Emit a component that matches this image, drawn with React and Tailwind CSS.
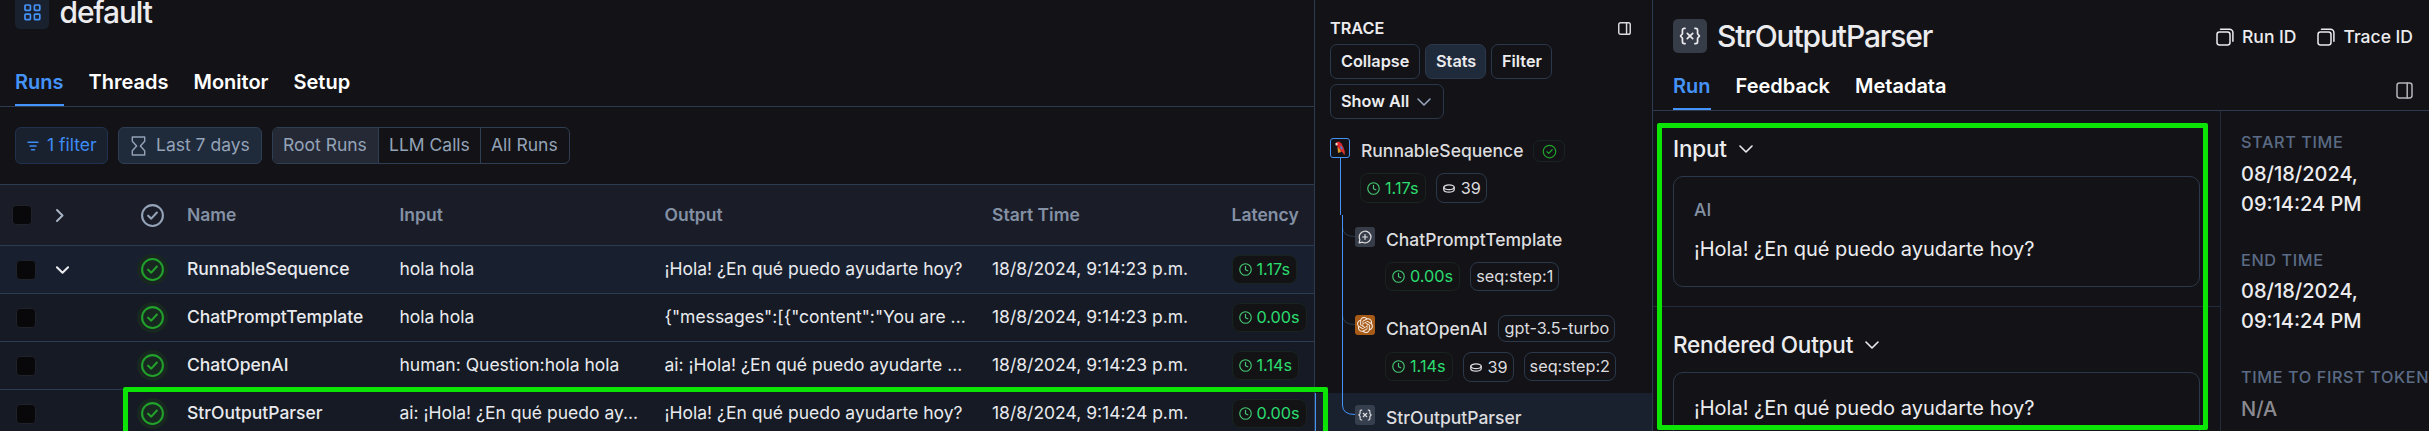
const Svg = ({ s, w, h, sw = 2, vb = '0 0 24 24', className = '', children }) => (
  <svg
    width={w || s}
    height={h || s}
    viewBox={vb}
    fill="none"
    stroke="currentColor"
    strokeWidth={sw}
    strokeLinecap="round"
    strokeLinejoin="round"
    className={'shrink-0 ' + className}
  >
    {children}
  </svg>
)

const GridIcon = () => (
  <Svg s={17} sw={1.7} vb="0 0 17 17">
    <rect x="1" y="1" width="5.4" height="5.4" rx="0.8" />
    <rect x="10.4" y="1" width="5.4" height="5.4" rx="0.8" />
    <rect x="1" y="10.2" width="5.4" height="5.4" rx="0.8" />
    <rect x="10.4" y="10.2" width="5.4" height="5.4" rx="0.8" />
  </Svg>
)
const FilterIcon = () => (
  <Svg w={12} h={10} vb="0 0 12 10" sw={1.5}>
    <path d="M1 1.3h10M3 5h6M4.5 8.7h3" />
  </Svg>
)
const Hourglass = () => (
  <Svg w={15} h={20} vb="0 0 15 20" sw={1.4}>
    <path d="M1.3 1h12.4v4.2L9.4 10l4.3 4.8V19H1.3v-4.2L5.6 10 1.3 5.2z" />
  </Svg>
)
const CheckCircle = ({ s = 25, sw = 2 }) => (
  <Svg s={s} sw={sw}>
    <circle cx="12" cy="12" r="10" />
    <path d="m7.8 12.2 3 2.8 5.4-5.8" />
  </Svg>
)
const Clock = ({ s = 13 }) => (
  <Svg s={s} sw={2.1} className="text-[#45c873]">
    <circle cx="12" cy="12" r="10.6" />
    <path d="M12 6v6.4l4.2 2" />
  </Svg>
)
const Coins = () => (
  <Svg w={12} h={9} vb="0 0 12 9" sw={1.3}>
    <ellipse cx="6" cy="3.3" rx="5.2" ry="2.4" />
    <path d="M.8 3.3v2.4C.8 7 3.1 8.1 6 8.1s5.2-1.1 5.2-2.4V3.3" />
  </Svg>
)
const Chevron = ({ w = 14, h = 8, sw = 1.6 }) => (
  <Svg w={w} h={h} vb="0 0 14 8" sw={sw}>
    <path d="m1 1 6 6 6-6" />
  </Svg>
)
const PanelIcon = ({ s, sw = 1.5 }) => (
  <Svg s={s} vb="0 0 17 17" sw={sw}>
    <rect x="1" y="1" width="15" height="15" rx="2.4" />
    <path d="M11.2 1v15" />
  </Svg>
)
const CopyIcon = () => (
  <Svg s={18} vb="0 0 18 18" sw={1.5}>
    <rect x="1" y="4" width="13" height="13" rx="2.4" />
    <path d="M4.5 1.2h9a3.4 3.4 0 0 1 3.4 3.4v8.6" />
  </Svg>
)
const BracesX = ({ w, h, sw = 2 }) => (
  <Svg w={w} h={h} vb="0 0 24 20" sw={sw}>
    <path d="M6.5 1.5H5.600a2 2 0 0 0-2 2v4L1.500 10l2.100 2.500v4a2 2 0 0 0 2 2h.9M17.500 1.500h.9a2 2 0 0 1 2 2v4l2.100 2.500-2.100 2.500v4a2 2 0 0 1-2 2h-.9M9 7l6 6M15 7l-6 6" />
  </Svg>
)
const ChatPlus = () => (
  <Svg s={14} sw={2.1}>
    <path d="M3.200 16.500A10 10 0 1 1 7.500 20.900L1.800 22.200z" />
    <path d="M12 8v8M8 12h8" />
  </Svg>
)
const OpenAIMark = () => (
  <svg width="16" height="16" viewBox="0 0 24 24" fill="currentColor" className="shrink-0">
    <path d="M22.282 9.821a5.985 5.985 0 0 0-.516-4.910 6.046 6.046 0 0 0-6.510-2.900A6.065 6.065 0 0 0 4.981 4.182a5.985 5.985 0 0 0-3.998 2.900 6.046 6.046 0 0 0 .743 7.097 5.980 5.980 0 0 0 .510 4.911 6.051 6.051 0 0 0 6.515 2.900A5.985 5.985 0 0 0 13.260 24a6.056 6.056 0 0 0 5.772-4.206 5.990 5.990 0 0 0 3.998-2.900 6.056 6.056 0 0 0-.747-7.073zM13.260 22.430a4.476 4.476 0 0 1-2.876-1.041l.141-.080 4.779-2.758a.795.795 0 0 0 .392-.681v-6.737l2.020 1.169a.071.071 0 0 1 .038.052v5.583a4.504 4.504 0 0 1-4.494 4.493zM3.600 18.304a4.470 4.470 0 0 1-.535-3.014l.142.085 4.783 2.759a.771.771 0 0 0 .780 0l5.843-3.369v2.332a.080.080 0 0 1-.033.062L9.740 19.950a4.500 4.500 0 0 1-6.140-1.646zM2.341 7.896a4.485 4.485 0 0 1 2.365-1.973V11.600a.766.766 0 0 0 .388.676l5.815 3.355-2.020 1.168a.076.076 0 0 1-.071 0l-4.831-2.786A4.504 4.504 0 0 1 2.341 7.872zm16.596 3.856-5.833-3.388L15.119 7.200a.076.076 0 0 1 .071 0l4.830 2.791a4.494 4.494 0 0 1-.676 8.105v-5.678a.790.790 0 0 0-.407-.667zm2.010-3.023-.141-.085-4.774-2.782a.776.776 0 0 0-.785 0L9.409 9.230V6.897a.066.066 0 0 1 .028-.061l4.830-2.787a4.500 4.500 0 0 1 6.680 4.660zM8.307 12.863l-2.020-1.164a.080.080 0 0 1-.038-.057V6.075a4.500 4.500 0 0 1 7.375-3.453l-.142.080L8.704 5.460a.795.795 0 0 0-.393.681zm1.097-2.365 2.602-1.500 2.607 1.500v2.999l-2.597 1.500-2.607-1.500z" />
  </svg>
)
const Parrot = () => (
  <svg width="12" height="14" viewBox="0 0 12 14" className="shrink-0">
    <path d="M2 1.500 5 .5l2.500 2 2 4 1.500 5-1.500.5-3-2-2.500-3z" fill="#e0262d" />
    <path d="M3.500 6 6 8.500 7 11l-3 1z" fill="#d9952b" />
    <path d="M7 4.500 9 8l-1.500.5L6 6z" fill="#3f86d8" />
    <path d="M1.200 2.500 3.500 1.500v2L2 5z" fill="#f3e6d0" />
    <path d="m8.800 9.500 1.700 4" stroke="#d8432f" strokeWidth="1.200" />
  </svg>
)

const Latency = ({ v, className = '' }) => (
  <span
    className={
      'inline-flex shrink-0 items-center gap-[5px] rounded-[8px] border border-[#18241f] bg-[#131316] px-[6px] text-[16.250px] text-[#2bdc6e] ' +
      className
    }
  >
    <Clock />
    {v}
  </span>
)
const Tag = ({ children, className = '' }) => (
  <span
    className={
      'inline-flex shrink-0 items-center rounded-[8px] border border-[#2b384a] text-[16.250px] text-[#dcdcdf] ' +
      className
    }
  >
    {children}
  </span>
)
const Tokens = () => (
  <Tag className="h-[30px] w-[51px] gap-[6px] pl-[6px]">
    <Coins />
    39
  </Tag>
)
const Tab = ({ children, active, className = 'pb-[10px] leading-[24px]' }) => (
  <div
    className={
      'border-b-2 text-[20px] font-semibold ' +
      className +
      (active ? ' border-[#4593f8] text-[#4593f8]' : ' border-transparent text-white')
    }
  >
    {children}
  </div>
)
const Checkbox = () => (
  <span className="block size-[20px] rounded-[4px] border border-[#20222a] bg-[#08080b]" />
)

const rows = [
  ['RunnableSequence', 'hola hola', '¡Hola! ¿En qué puedo ayudarte hoy?', '18/8/2024, 9:14:23 p.m.', '1.17s'],
  ['ChatPromptTemplate', 'hola hola', '{"messages":[{"content":"You are ...', '18/8/2024, 9:14:23 p.m.', '0.00s'],
  ['ChatOpenAI', 'human: Question:hola hola', 'ai: ¡Hola! ¿En qué puedo ayudarte ...', '18/8/2024, 9:14:23 p.m.', '1.14s'],
  ['StrOutputParser', 'ai: ¡Hola! ¿En qué puedo ay...', '¡Hola! ¿En qué puedo ayudarte hoy?', '18/8/2024, 9:14:24 p.m.', '0.00s'],
]
const cols =
  'grid shrink-0 grid-cols-[56px_84px_47px_212.500px_265px_327.500px_239.500px_82.500px] items-center'
const runsTab = 'pb-[12px] leading-[20px]'

function RunsPanel() {
  return (
    <section className="flex w-[1315px] shrink-0 flex-col border-r border-[#2c3b4f]">
      <div className="flex h-[72px] shrink-0 items-start pl-[15px]">
        <div className="-mt-[5px] flex size-[34px] items-center justify-center rounded-[5px] bg-[#19202e] text-[#4593f8]">
          <GridIcon />
        </div>
        <h1 className="ml-[10.500px] text-[30px] leading-[24px] font-medium tracking-[-1.150px] text-[#ececef]">
          default
        </h1>
      </div>
      <nav className="flex h-[35px] shrink-0 gap-[25px] border-b border-[#2c3b4f] pl-[15px] text-[20px]">
        <Tab active className={runsTab}>Runs</Tab>
        <Tab className={runsTab}>Threads</Tab>
        <Tab className={runsTab}>Monitor</Tab>
        <Tab className={runsTab}>Setup</Tab>
      </nav>
      <div className="flex h-[77px] shrink-0 items-start gap-[10px] pt-[20px] pl-[15px] text-[17.5px] text-[#94a3b8]">
        <div className="flex h-[37px] w-[93px] items-center gap-[8px] rounded-[6px] border border-[#1f3350] bg-[#19202e] pl-[11px] text-[#3d8cf5]">
          <FilterIcon />
          1 filter
        </div>
        <div className="flex h-[37px] w-[144px] items-center gap-[10px] rounded-[6px] border border-[#2f3e52] bg-[#1f2a3b] pl-[12px]">
          <Hourglass />
          Last 7 days
        </div>
        <div className="flex h-[37px] w-[298px] overflow-hidden rounded-[6px] border border-[#2f3e52]">
          <div className="flex w-[106px] items-center border-r border-[#2f3e52] bg-[#242935] pl-[10px]">Root Runs</div>
          <div className="flex w-[102px] items-center border-r border-[#2f3e52] pl-[10px]">LLM Calls</div>
          <div className="flex items-center pl-[10px]">All Runs</div>
        </div>
      </div>
      <div className={cols + ' h-[62px] border-y border-[#2c3b4f] bg-[#1a1d28] text-[17.5px] font-semibold text-[#8491a5]'}>
        <div className="pl-[12px]"><Checkbox /></div>
        <div className="text-[#a9b4c4]">
          <Svg w={8} h={13} vb="0 0 8 13" sw={1.9}><path d="m1 1 5.500 5.500L1 12" /></Svg>
        </div>
        <div className="text-[#94a3b8]"><CheckCircle /></div>
        <div>Name</div>
        <div>Input</div>
        <div>Output</div>
        <div>Start Time</div>
        <div>Latency</div>
      </div>
      {rows.map((r, i) => (
        <div
          key={i}
          className={
            cols +
            ' h-[48px] border-b border-[#2c3b4f] text-[17.5px] text-[#e9eaee] ' +
            (i === 0 ? 'bg-[#182030]' : 'bg-[#151a24]')
          }
        >
          <div className="pl-[16px]"><Checkbox /></div>
          <div>{i === 0 && <Chevron w={13} h={8} sw={2.2} />}</div>
          <div>
            <span className="-ml-[3px] flex size-[31px] items-center justify-center rounded-full bg-[#18271f] text-[#22a02c]">
              <CheckCircle />
            </span>
          </div>
          <div className="font-[550]">{r[0]}</div>
          <div>{r[1]}</div>
          <div>{r[2]}</div>
          <div>{r[3]}</div>
          <div className="flex"><Latency v={r[4]} className="h-[29px]" /></div>
        </div>
      ))}
    </section>
  )
}

const traceBtn =
  'flex h-[35px] items-center rounded-[7px] border border-[#2b384a] px-[10px] text-[16.250px] font-semibold text-[#ececef]'
const nodeName = 'text-[17.5px] font-medium text-[#dcdcdf]'
const nodeBox = 'flex size-[20px] shrink-0 items-center justify-center rounded-[3px]'

function TracePanel() {
  return (
    <section className="relative flex w-[338px] shrink-0 flex-col border-r border-[#2c3b4f]">
      <div className="flex h-[44px] items-center justify-between pt-[12px] pr-[21px] pl-[15px]">
        <h2 className="text-[16.250px] font-semibold text-[#ececef]">TRACE</h2>
        <span className="text-[#dcdcdf]"><PanelIcon s={13} sw={1.9} /></span>
      </div>
      <div className="flex h-[94px] flex-wrap content-start gap-[5px] pl-[15px]">
        <div className={traceBtn + ' w-[90px]'}>Collapse</div>
        <div className={traceBtn + ' w-[61px] bg-[#1f2a3b]'}>Stats</div>
        <div className={traceBtn + ' w-[61px]'}>Filter</div>
        <div className={traceBtn + ' w-[114px] gap-[8px]'}>
          Show All
          <span className="text-[#94a3b8]"><Chevron /></span>
        </div>
      </div>
      <div className="flex h-[35px] items-start pl-[15px]">
        <span className={nodeBox + ' border border-[#4593f8]'}><Parrot /></span>
        <span className={nodeName + ' ml-[11px] leading-[26px]'}>RunnableSequence</span>
        <span className="mt-[2px] ml-[10px] flex h-[22px] w-[32px] items-center justify-center rounded-[7px] border border-[#18241f] text-[#22a02c]">
          <CheckCircle s={15} />
        </span>
      </div>
      <div className="flex h-[54px] items-start gap-[10px] pl-[45px]">
        <Latency v="1.17s" className="h-[30px]" />
        <Tokens />
      </div>
      <div className="flex h-[35px] items-start pl-[40px]">
        <span className={nodeBox + ' bg-[#363c48] text-[#dcdcdf]'}><ChatPlus /></span>
        <span className={nodeName + ' ml-[11px] leading-[25px]'}>ChatPromptTemplate</span>
      </div>
      <div className="flex h-[53px] items-start gap-[10px] pl-[70px]">
        <Latency v="0.00s" className="h-[29px]" />
        <Tag className="h-[29px] px-[5px]">seq:step:1</Tag>
      </div>
      <div className="flex h-[37px] items-start pl-[40px]">
        <span className={nodeBox + ' bg-[#a85a17] text-[#f3e9df]'}><OpenAIMark /></span>
        <span className={nodeName + ' ml-[11px] leading-[27px]'}>ChatOpenAI</span>
        <Tag className="ml-[11px] h-[27px] px-[5px]">gpt-3.5-turbo</Tag>
      </div>
      <div className="flex h-[41px] items-start gap-[10px] pl-[70px]">
        <Latency v="1.14s" className="h-[29px]" />
        <Tokens />
        <Tag className="h-[29px] px-[5px]">seq:step:2</Tag>
      </div>
      <div className="flex h-[38px] items-start border-l border-[#4593f8] bg-[#19202e] pt-[12px] pl-[39px]">
        <span className={nodeBox + ' bg-[#363f4e] text-[#dcdcdf]'}><BracesX w={14} h={12} /></span>
        <span className={nodeName + ' ml-[11px] leading-[25px]'}>StrOutputParser</span>
      </div>
      <svg width="60" height="431" className="pointer-events-none absolute top-0 left-0" fill="none">
        <path d="M27.500 227q0 9.500 12.500 9.500M27.500 315q0 9.500 12.500 9.500" stroke="#2b384a" />
        <path d="M25.500 158V215M27.500 215V405q0 9.500 12.500 9.500" stroke="#4593f8" />
      </svg>
    </section>
  )
}

const Card = ({ children, className = '' }) => (
  <div className={'flex w-[527px] flex-col rounded-[10px] border border-[#2b384a] pl-[20px] text-[20px] text-[#ececef] ' + className}>
    {children}
  </div>
)
const label = 'text-[16.250px] leading-[20px] tracking-[0.600px] whitespace-nowrap text-[#5b6b85]'
const heading =
  'flex h-[41px] items-start gap-[12px] text-[22.5px] leading-[28px] font-medium tracking-[-0.200px] text-[#ececef]'

function DetailPanel() {
  return (
    <section className="flex min-w-0 flex-1 flex-col">
      <header className="flex h-[74px] shrink-0 items-start pt-[19px] pr-[16px] pl-[20px]">
        <div className="flex size-[34px] items-center justify-center rounded-[5px] bg-[#363c48] text-[#ececef]">
          <BracesX w={22} h={18} sw={1.9} />
        </div>
        <h1 className="ml-[10px] text-[30px] leading-[34px] font-medium tracking-[-1.150px] text-[#ececef]">
          StrOutputParser
        </h1>
        <div className="mt-[5px] ml-auto flex items-center gap-[21px] text-[17.5px] leading-[26px] font-medium text-[#ececef]">
          <div className="flex items-center gap-[8px]"><CopyIcon />Run ID</div>
          <div className="flex items-center gap-[8px]"><CopyIcon />Trace ID</div>
        </div>
      </header>
      <nav className="flex h-[37px] shrink-0 gap-[25px] border-b border-[#2c3b4f] pr-[16px] pl-[20px]">
        <Tab active>Run</Tab>
        <Tab>Feedback</Tab>
        <Tab>Metadata</Tab>
        <span className="mt-[8px] ml-auto text-[#b4b4ba]"><PanelIcon s={17} /></span>
      </nav>
      <div className="flex min-h-0 flex-1">
        <div className="flex w-[568px] shrink-0 flex-col border-r border-[#212c3d]">
          <div className="flex h-[196px] shrink-0 flex-col border-b border-[#212c3d] pt-[24px] pl-[20px]">
            <div className={heading}>
              Input
              <span className="mt-[10px]"><Chevron /></span>
            </div>
            <Card className="h-[111px] pt-[22px]">
              <span className="text-[17.5px] leading-[22px] font-medium text-[#8491a5]">AI</span>
              <span className="mt-[13px] leading-[30px]">¡Hola! ¿En qué puedo ayudarte hoy?</span>
            </Card>
          </div>
          <div className="flex flex-col pt-[24px] pl-[20px]">
            <div className={heading}>
              Rendered Output
              <span className="mt-[10px]"><Chevron /></span>
            </div>
            <Card className="h-[80px] pt-[20px]">
              <span className="leading-[30px]">¡Hola! ¿En qué puedo ayudarte hoy?</span>
            </Card>
          </div>
        </div>
        <aside className="flex flex-col pt-[21px] pl-[20px] text-[20px] leading-[30px] font-medium text-[#ececef]">
          <div className={label}>START TIME</div>
          <div className="mt-[7px]">08/18/2024,<br />09:14:24 PM</div>
          <div className={label + ' mt-[31px]'}>END TIME</div>
          <div className="mt-[6px]">08/18/2024,<br />09:14:24 PM</div>
          <div className={label + ' mt-[31px]'}>TIME TO FIRST TOKEN</div>
          <div className="mt-[7px] text-[#8b8b91]">N/A</div>
        </aside>
      </div>
    </section>
  )
}

export default function App() {
  return (
    <main className="relative flex h-[431px] w-[2429px] overflow-hidden bg-[#131317] font-['Inter',sans-serif] whitespace-nowrap">
      <RunsPanel />
      <TracePanel />
      <DetailPanel />
      <div className="absolute top-[387px] left-[123px] h-[60px] w-[1205px] rounded-[2px] border-[5px] border-[#0be405]" />
      <div className="absolute top-[123px] left-[1657px] h-[307px] w-[551px] rounded-[2px] border-[5px] border-[#0be405]" />
    </main>
  )
}
